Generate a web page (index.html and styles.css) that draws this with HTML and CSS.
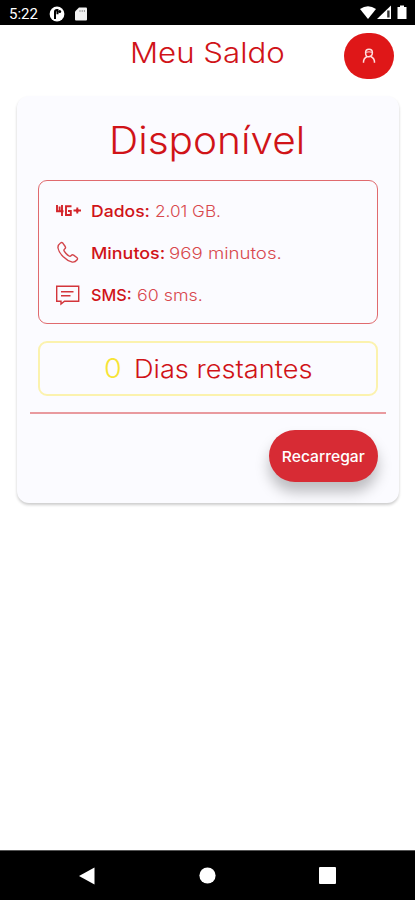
FILE: index.html
```html
<!DOCTYPE html>
<html lang="pt">
<head>
<meta charset="utf-8">
<meta name="viewport" content="width=device-width, initial-scale=1">
<title>Meu Saldo</title>
<link rel="stylesheet" href="styles.css">
</head>
<body>
<div class="status">
  <span class="clock">5:22</span>
  <svg class="app" width="16" height="16" viewBox="0 0 16 16"><circle cx="8" cy="8" r="7.4" fill="#fff"/><path d="M6 13V5.7Q6 4 7.8 4H8.5V8.2" fill="none" stroke="#000" stroke-width="2"/><circle cx="10.7" cy="5.6" r="1.5"/></svg>
  <svg class="sd" width="12" height="14" viewBox="0 0 12 14"><path d="M4 .5h7q1 0 1 1v11q0 1-1 1H1q-1 0-1-1V4.5z" fill="#f2f2f2"/><path d="M5 3v2M7.2 3v2M9.4 3v2" stroke="#999"/></svg>
  <svg class="signals" width="50" height="16" viewBox="0 0 50 16"><path d="M2 4Q10 -1.5 18 4L10 14z" fill="#fff"/><path d="M33 .5V14H19z" fill="#fff"/><path d="M29.2 5.5h2.4v7h-2.4z" fill="#333"/><path d="M39.5 2H42V.5h4V2h2.5v12h-9z" fill="#fff"/></svg>
</div>
<header class="header">
  <h1 class="title"><span>Meu Saldo</span></h1>
  <button class="avatar" aria-label="Perfil"><svg width="14" height="16" viewBox="0 0 14 16" fill="none" stroke="#ffdede" stroke-width="1.5"><path d="M3.6 4.7Q3.6 1.3 7 1.3T10.4 4.7T7 8.7T3.6 4.7z"/><path d="M3.8 4.3Q7 3.4 10.2 4.3" stroke-width="1"/><path d="M1.5 14.8Q1.2 10.3 5.2 8.5M8.8 8.5Q12.8 10.3 12.5 14.8"/></svg></button>
</header>
<main class="card">
  <h2 class="available"><span>Disponível</span></h2>
  <section class="plan">
    <div class="row">
      <svg width="26" height="24" viewBox="0 0 26 24" fill="none" stroke="#d3242a" stroke-width="1.9"><path d="M2 6V12.3H8.5M7 6V17M4.6 7.5V12M16.5 7.2H11V16H15.8V12H13M18.5 11.5H26M22.3 8.6V14.4"/><path d="M20.2 11.5L22.3 9.4L24.4 11.5L22.3 13.6z" fill="#d3242a" stroke="none"/></svg>
      <b class="l1">Dados:</b><span class="v1">2.01 GB.</span>
    </div>
    <div class="row">
      <svg width="26" height="24" viewBox="0 0 26 24" fill="none" stroke="#d3454b" stroke-width="1.4" stroke-linejoin="round"><path d="M5.5 2Q6.7 1 7.8 2.1L10.2 5.5Q11 6.8 9.9 7.7Q8.4 8.9 9.2 10.1Q11 13.1 14 15Q15.2 15.8 16.2 14.5Q17.3 13.4 18.6 14.1L21.8 16.5Q23.1 17.5 22.1 18.8Q20 21.5 17.3 21.1Q12.5 20 8 15.5Q3.7 11 3 7Q2.6 4 5.5 2z"/></svg>
      <b class="l2">Minutos:</b><span class="v2">969 minutos.</span>
    </div>
    <div class="row">
      <svg width="26" height="24" viewBox="0 0 26 24" fill="none" stroke="#d3353b" stroke-width="1.4"><path d="M1.7 3.2H23.7V18.2H9.5L6 21V18.2H1.7zM6 8.7H18.5M6 12.7H15.5"/></svg>
      <b class="l3">SMS:</b><span class="v3">60 sms.</span>
    </div>
  </section>
  <section class="days"><span class="count">0</span><span class="remaining">Dias restantes</span></section>
  <hr>
  <button class="recharge"><span>Recarregar</span></button>
</main>
<nav class="nav">
  <svg width="16" height="18" viewBox="0 0 16 18"><path d="M0 9L15.5 .5V17.5z" fill="#fff"/></svg>
  <svg width="17" height="17" viewBox="0 0 17 17"><circle cx="8.5" cy="8.5" r="8.1" fill="#fff"/></svg>
  <svg width="17" height="17" viewBox="0 0 17 17"><rect width="17" height="17" rx="1" fill="#fff"/></svg>
</nav>
</body>
</html>
```
FILE: styles.css
```css
* { box-sizing: border-box; }
body { margin: 0; height: 900px; display: flex; flex-direction: column; background: #fff; color: #d01318; font-family: Inter, sans-serif; overflow: hidden; }
h1, h2 { margin: 0; font-weight: 300; line-height: 1; white-space: nowrap; }
button { border: 0; padding: 0; color: #fff; font-family: inherit; display: flex; align-items: center; justify-content: center; }
svg { flex: none; }
.status { height: 25px; flex: none; background: #000; display: flex; align-items: center; padding: 2px 7px 0 9px; color: #fff; }
.clock { font: 400 15px Roboto, sans-serif; width: 40px; }
.sd { margin-left: 10px; }
.signals { margin-left: auto; margin-top: -2px; }
.header { height: 71px; flex: none; display: flex; align-items: flex-start; padding: 8px 21px 0 130px; }
.title { font-size: 28px; width: 214px; padding-top: 6px; }
.title span, .available span, .row b, .row span, .count, .remaining, .recharge span { display: inline-block; white-space: nowrap; transform-origin: left; }
.title span { transform: scaleX(1.115); }
.avatar { width: 50px; height: 46px; border-radius: 23px; background: #df1718; }
.card { width: 382px; height: 407px; flex: none; margin-left: 17px; padding: 25px 13px 0; border-radius: 12px; background: #fbfbff; box-shadow: 0 2px 3px rgba(0,0,0,.2); }
.available { font-size: 38px; padding-left: 79px; height: 59px; }
.available span { transform: scaleX(1.068); }
.plan { margin: 0 8px; height: 144px; border: 1px solid #e06a6e; border-radius: 9px; padding: 9px 17px; }
.row { height: 42px; display: flex; align-items: center; font-size: 16.5px; }
.row svg { margin: 0 10px 0 -1px; }
.row b { font-weight: 500; width: 64px; }
.row .l1 { transform: scaleX(1.065); }
.row .l2 { width: 78px; transform: scaleX(1.085); }
.row .l3 { width: 46px; transform: scaleX(.98); }
.row span { font-weight: 300; color: #d8484d; }
.row .v1 { transform: scaleX(1.04); }
.row .v2 { transform: scaleX(1.13); }
.row .v3 { transform: scaleX(1.08); }
.days { height: 55px; margin: 17px 8px 0; border: 2px solid #fbf2ae; border-radius: 9px; display: flex; align-items: center; padding-left: 64px; font-size: 25px; font-weight: 300; }
.count { color: #f7e436; width: 30px; font-size: 27px; transform: scaleX(1.06); }
.remaining { transform: scaleX(1.087); }
hr { margin: 16px 0; border: 0; height: 2px; background: #e99a9f; }
.recharge { width: 109px; height: 52px; margin-left: 239px; border-radius: 26px; background: #d72b34; font-size: 15.2px; font-weight: 500; box-shadow: 0 10px 14px rgba(0,0,0,.25); }
.recharge span { transform: scaleX(1.03); transform-origin: center; }
.nav { height: 50px; flex: none; margin-top: auto; background: #000; display: flex; align-items: center; justify-content: space-between; padding: 0 79px; border-top: 1px solid #555; }
```
